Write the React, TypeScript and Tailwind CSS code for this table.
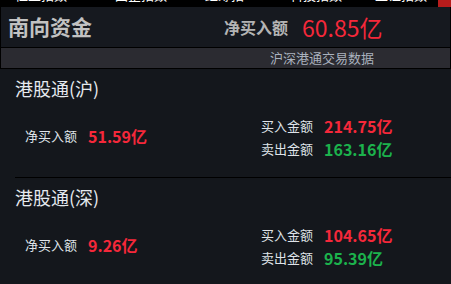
const font = { fontFamily: '"Noto Sans CJK SC", "Noto Sans", sans-serif' };

const sections = [
  { name: "港股通(沪)", net: "51.59亿", buy: "214.75亿", sell: "163.16亿" },
  { name: "港股通(深)", net: "9.26亿", buy: "104.65亿", sell: "95.39亿" },
];

function Section({ s, last }: { s: (typeof sections)[number]; last: boolean }) {
  return (
    <div className={`h-[109px] pt-[7px] ${last ? "" : "border-b border-black"}`}>
      <div className="text-[18px] leading-6 text-[#e6eaef]">{s.name}</div>
      <div className="flex items-center mt-[14px]">
        {/* net buy */}
        <div className="w-[246px] flex items-center pl-[10px] pb-[3px]">
          <span className="text-[13px] text-[#dfe3e8]">净买入额</span>
          <span className="ml-[11px] text-[16px] font-bold text-[#f5283a]">{s.net}</span>
        </div>
        {/* buy / sell */}
        <div className="flex flex-col">
          <div className="flex items-center h-[23px]">
            <span className="text-[13px] text-[#dfe3e8]">买入金额</span>
            <span className="ml-[11px] text-[16px] font-bold text-[#f5283a]">{s.buy}</span>
          </div>
          <div className="flex items-center h-[23px]">
            <span className="text-[13px] text-[#dfe3e8]">卖出金额</span>
            <span className="ml-[11px] text-[16px] font-bold text-[#1cb24c]">{s.sell}</span>
          </div>
        </div>
      </div>
    </div>
  );
}

export default function App() {
  return (
    <div className="w-[451px] h-[284px] overflow-hidden bg-[#14171c]" style={font}>
      {/* cut-off ticker strip */}
      <div className="h-[7px] bg-black overflow-hidden relative">
        <div className="flex -mt-[14px] text-[13px] leading-[18px] text-white whitespace-nowrap">
          <span className="ml-[15px] w-[100px]">恒生指数</span>
          <span className="w-[90px]">国企指数</span>
          <span className="w-[85px]">红筹指</span>
          <span className="w-[85px]">科技指数</span>
          <span>上证指数</span>
        </div>
        <div className="absolute right-0 top-0 w-[13px] h-[7px] bg-[#b81c1c]" />
      </div>

      {/* header */}
      <div className="h-[40px] flex items-center bg-[#16191f] border-x border-black">
        <div className="w-[223px] pl-[7px] text-[21px] font-bold text-[#c2c2c2]">南向资金</div>
        <div className="text-[16px] font-bold text-[#b4b4b4]">净买入额</div>
        <div className="ml-[14px] text-[23px] text-[#f5283a] leading-none">60.85亿</div>
      </div>
      <div className="h-px bg-black" />
      <div className="h-[20px] flex items-center bg-[#2b2b31] border-x border-black pl-[269px]">
        <span className="text-[13px] text-[#aab2be]">沪深港通交易数据</span>
      </div>
      <div className="h-px bg-black" />

      <div className="ml-[15px]">
        {sections.map((s, i) => (
          <Section key={s.name} s={s} last={i === sections.length - 1} />
        ))}
      </div>
    </div>
  );
}
